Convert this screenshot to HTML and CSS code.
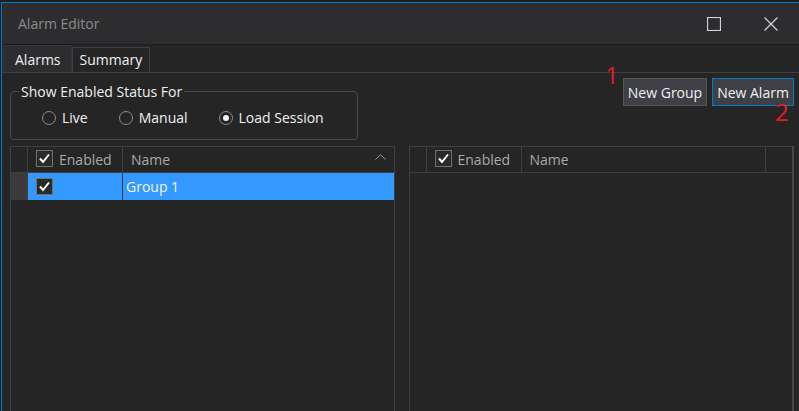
FILE: index.html
```html
<!DOCTYPE html>
<html lang="en">
<head>
    <meta charset="UTF-8">
    <meta name="viewport" content="width=device-width, initial-scale=1.0">
    <title>Alarm Editor</title>
    <link rel="stylesheet" href="styles.css">
</head>
<body>
    <div class="window">
        <!-- Title Bar -->
        <div class="titlebar">
            <span class="title">Alarm Editor</span>
            <div class="controls">
                <div class="ctl">
                    <svg width="14" height="14" viewBox="0 0 14 14"><rect x="0.5" y="0.5" width="13" height="13" fill="none" stroke="#d4d4d4" stroke-width="1.2"/></svg>
                </div>
                <div class="ctl">
                    <svg width="14" height="14" viewBox="0 0 14 14"><path d="M0.5 0.5 L13.5 13.5 M13.5 0.5 L0.5 13.5" stroke="#d4d4d4" stroke-width="1.2"/></svg>
                </div>
            </div>
        </div>

        <!-- Tabs -->
        <div class="tabs">
            <div class="tab active">Alarms</div>
            <div class="tab">Summary</div>
        </div>

        <div class="panel">
            <div class="toolbar">
                <fieldset class="status">
                    <legend>Show Enabled Status For</legend>
                    <div class="radios">
                        <label class="radio"><span class="dot"></span>Live</label>
                        <label class="radio"><span class="dot"></span>Manual</label>
                        <label class="radio checked"><span class="dot"></span>Load Session</label>
                    </div>
                </fieldset>
                <div class="actions">
                    <button class="btn group-btn">New Group</button>
                    <button class="btn alarm-btn focused">New Alarm</button>
                </div>
            </div>

            <!-- Group / Alarm grids -->
            <div class="grids">
                <div class="grid groups">
                    <div class="cell head rowhead"></div>
                    <div class="cell head"><span class="check head-check"><svg width="15" height="15" viewBox="0 0 15 15"><path d="M3 7.5 L6 11 L12 3.5" fill="none" stroke="#fff" stroke-width="2"/></svg></span>Enabled</div>
                    <div class="cell head name-head">Name
                        <svg class="sort" width="11" height="6" viewBox="0 0 11 6"><path d="M0.5 5.5 L5.5 0.7 L10.5 5.5" fill="none" stroke="#9a9a9a" stroke-width="1"/></svg>
                    </div>

                    <div class="cell rowhead current"></div>
                    <div class="cell selected"><span class="check"><svg width="15" height="15" viewBox="0 0 15 15"><path d="M3 7.5 L6 11 L12 3.5" fill="none" stroke="#fff" stroke-width="2"/></svg></span></div>
                    <div class="cell selected text">Group 1</div>
                </div>

                <div class="grid alarms">
                    <div class="cell head rowhead"></div>
                    <div class="cell head"><span class="check head-check"><svg width="15" height="15" viewBox="0 0 15 15"><path d="M3 7.5 L6 11 L12 3.5" fill="none" stroke="#fff" stroke-width="2"/></svg></span>Enabled</div>
                    <div class="cell head">Name</div>
                    <div class="cell head last"></div>
                </div>
            </div>
        </div>

        <!-- step markers -->
        <span class="mark mark-1">1</span>
        <span class="mark mark-2">2</span>
    </div>
</body>
</html>
```

FILE: styles.css
```css
* {
    box-sizing: border-box;
}

html, body {
    margin: 0;
    height: 100%;
    overflow: hidden;
}

body {
    background-color: #1e1e1e;
    font-family: "Open Sans", "Noto Sans", sans-serif;
    font-size: 14px;
}

.window {
    position: relative;
    margin: 2px 0 0 1px;
    height: 420px;
    border-top: 1px solid #007acc;
    border-left: 1px solid #007acc;
    background-color: #252526;
    color: #f1f1f1;
    display: flex;
    flex-direction: column;
}

/* title bar */
.titlebar {
    height: 42px;
    flex: none;
    background-color: #2d2d30;
    border-bottom: 1px solid #1c1c1c;
    display: flex;
    align-items: center;
}

.title {
    padding-left: 16px;
    color: #8b8b8b;
}

.controls {
    margin-left: auto;
    display: flex;
    height: 100%;
}

.ctl {
    width: 57px;
    display: flex;
    align-items: center;
    justify-content: center;
}

/* tabs */
.tabs {
    height: 28px;
    flex: none;
    display: flex;
    align-items: flex-end;
    padding-left: 1px;
    border-bottom: 1px solid #3f3f46;
}

.tab {
    height: 25px;
    line-height: 24px;
    padding: 0 7px;
    border: 1px solid #3f3f46;
    border-bottom: none;
    color: #f1f1f1;
}

.tab.active {
    height: 27px;
    line-height: 27px;
    padding: 0 10px 0 11px;
    background-color: #2d2d30;
    border-color: #35353a;
}

/* content */
.panel {
    flex: 1;
    display: flex;
    flex-direction: column;
    padding: 0 5px 0 8px;
}

.toolbar {
    display: flex;
    justify-content: space-between;
    align-items: flex-start;
    padding-top: 5px;
}

.status {
    margin: 4px 0 0 0;
    width: 348px;
    padding: 0;
    border: 1px solid #4a4a4a;
    border-radius: 4px;
}

.status legend {
    margin-left: 8px;
    padding: 0 2px;
    line-height: 19px;
    color: #f1f1f1;
}

.radios {
    display: flex;
    gap: 31px;
    padding: 7px 0 12px 31px;
    line-height: 19px;
}

.radio {
    display: flex;
    align-items: center;
    gap: 6px;
}

.dot {
    width: 14px;
    height: 14px;
    border: 1px solid #8c8c8c;
    border-radius: 50%;
    display: flex;
    align-items: center;
    justify-content: center;
}

.radio.checked .dot::after {
    content: "";
    width: 6px;
    height: 6px;
    border-radius: 50%;
    background-color: #f1f1f1;
}

.actions {
    display: flex;
    gap: 5px;
}

.btn {
    height: 28px;
    padding: 0;
    font-family: inherit;
    font-size: 14px;
    color: #f1f1f1;
    background-color: #3f3f46;
    border: 1px solid #555555;
}

.group-btn {
    width: 84px;
}

.alarm-btn {
    width: 82px;
}

.btn.focused {
    border-color: #007acc;
}

/* grids */
.grids {
    flex: 1;
    display: flex;
    gap: 14px;
    margin-top: 6px;
}

.grid {
    flex: 1;
    display: grid;
    grid-template-rows: 26px 27px;
    align-content: start;
    border: 1px solid #3f3f3f;
    border-bottom: none;
}

.groups {
    grid-template-columns: 17px 95px 1fr;
}

.alarms {
    grid-template-columns: 17px 95px 1fr 26px;
    border-right: 2px solid #464646;
}

.cell {
    display: flex;
    align-items: center;
    border-right: 1px solid #3f3f3f;
    color: #a9a9a9;
}

.cell.head {
    border-bottom: 1px solid #3f3f3f;
    padding-left: 8px;
}

.cell.head.rowhead,
.cell.head.last {
    padding: 0;
}

.cell.last {
    border-right: none;
}

.name-head {
    padding-left: 9px;
}

.groups .cell:nth-child(3n) {
    border-right: none;
}

.sort {
    margin-left: auto;
    margin-right: 8px;
    margin-bottom: 5px;
}

.check {
    width: 17px;
    height: 17px;
    margin-left: 8px;
    border: 1px solid #707070;
    background-color: #2a2a2a;
    display: flex;
    align-items: center;
    justify-content: center;
}

.cell.head .check {
    margin-left: 0;
    margin-right: 6px;
    margin-bottom: 3px;
}

.cell.rowhead.current {
    background-color: #3a3a3a;
}

.cell.selected {
    background-color: #3399ff;
    color: #f4f4f4;
}

.cell.text {
    padding-left: 3px;
}

/* red step markers drawn over the screenshot */
.mark {
    position: absolute;
    font-size: 24px;
    line-height: 24px;
    color: #e01b24;
}

.mark-1 {
    left: 603px;
    top: 60px;
}

.mark-2 {
    left: 773px;
    top: 97px;
}
```
